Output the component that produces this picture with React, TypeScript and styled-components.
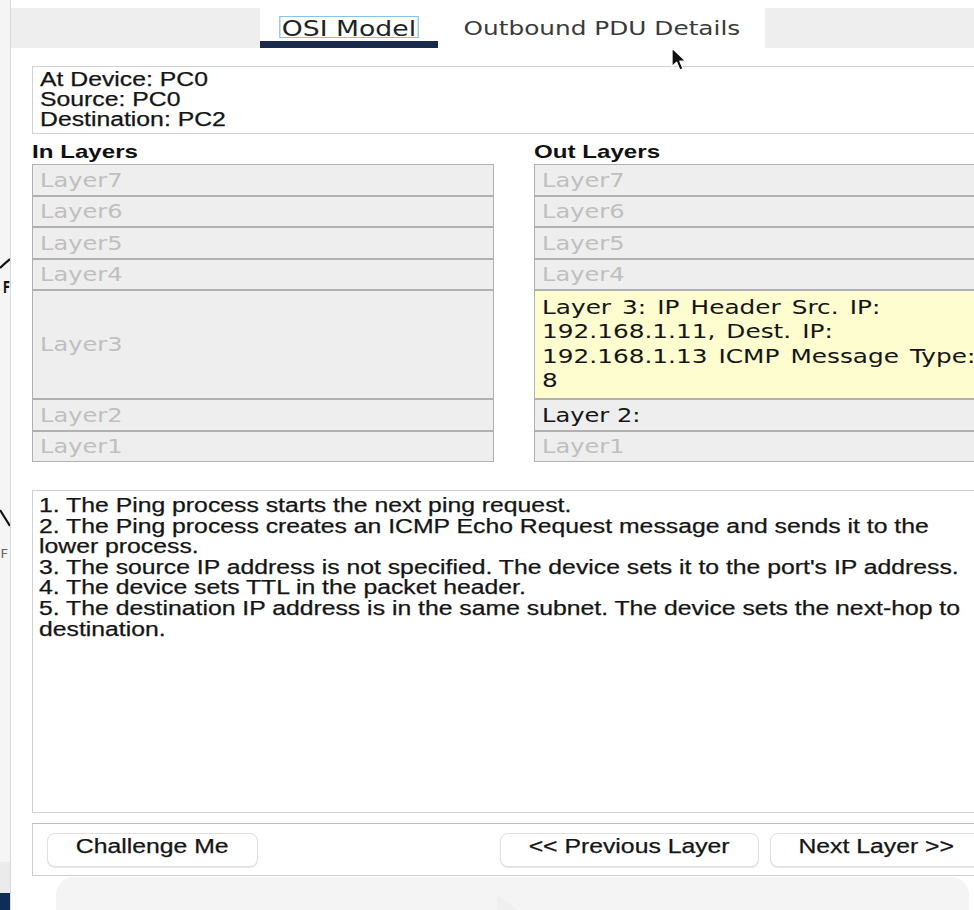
import styled, { createGlobalStyle, css } from "styled-components";

// the capture is stretched sideways, so every text run is widened by this factor
const STRETCH = 1.27;

const sans = `"Liberation Sans", Arial, Helvetica, sans-serif`;
const verdana = `"DejaVu Sans", Verdana, sans-serif`;

const GlobalStyle = createGlobalStyle`
  html, body {
    margin: 0;
    padding: 0;
    background: #ffffff;
    overflow: hidden;
  }
  #root {
    width: 974px;
    height: 910px;
  }
`;

const stretched = css`
  transform: scaleX(${STRETCH});
  transform-origin: 0 0;
  white-space: nowrap;
`;

// mac-style text is a touch heavier than Liberation at this size
const heavier = css`
  -webkit-text-stroke: 0.25px currentColor;
`;

const Page = styled.div`
  display: flex;
  width: 974px;
  height: 910px;
  overflow: hidden;
  background: #ffffff;
`;

const Backdrop = styled.svg`
  flex: 0 0 10px;
  display: block;
`;

const Window = styled.div`
  position: relative;
  flex: 0 0 1007px;
  display: flex;
  flex-direction: column;
  box-sizing: border-box;
  overflow: hidden;
  border-left: 1px solid #d8d8d8;
  background: #ffffff;
`;

const TabBar = styled.div`
  flex: none;
  display: flex;
  height: 40px;
  margin-top: 8px;
  padding-left: 249px;
  background: #efeeee;
`;

const Tab = styled.div<{ $width: number; $active?: boolean }>`
  display: flex;
  justify-content: center;
  align-items: flex-start;
  box-sizing: border-box;
  width: ${(p) => p.$width}px;
  padding-top: 8px;
  background: #ffffff;
  box-shadow: ${(p) => (p.$active ? "inset 0 -7px 0 #18294b" : "none")};
`;

const TabLabel = styled.span<{ $size: number; $focused?: boolean }>`
  display: inline-block;
  box-sizing: border-box;
  height: 22px;
  padding: 4px 1px 0;
  border: 1px solid ${(p) => (p.$focused ? "#86c3ea" : "transparent")};
  font-family: ${verdana};
  font-size: ${(p) => p.$size}px;
  line-height: 16px;
  color: ${(p) => (p.$focused ? "#222222" : "#3a3a3a")};
  ${stretched};
  transform-origin: 50% 0;
`;

const Pointer = styled.svg`
  position: absolute;
  left: 660px;
  top: 47px;
  pointer-events: none;
`;

const Body = styled.div`
  flex: none;
  display: flex;
  flex-direction: column;
  padding: 18px 21px 0;
`;

const InfoBox = styled.div`
  box-sizing: border-box;
  height: 68px;
  padding: 2px 7px 0;
  border: 1px solid #d2d2d2;
  font-family: ${sans};
  font-size: 19.5px;
  line-height: 20px;
  color: #151515;
  ${heavier};
`;

const InfoText = styled.div`
  ${stretched};
`;

const Columns = styled.div`
  display: grid;
  grid-template-columns: 1fr 1fr;
  column-gap: 40px;
  margin-top: 8px;
`;

const Column = styled.div`
  display: flex;
  flex-direction: column;
  min-width: 0;
`;

const ColumnTitle = styled.div`
  height: 20px;
  margin-bottom: 2px;
  font-family: ${sans};
  font-weight: bold;
  font-size: 19px;
  line-height: 20px;
  color: #111111;
  ${stretched};
`;

type Tone = "off" | "on" | "current";

const LayerRow = styled.div<{ $tall?: boolean; $tone: Tone }>`
  display: flex;
  align-items: center;
  box-sizing: border-box;
  height: ${(p) => (p.$tall ? 109 : 31.5)}px;
  padding: 0 7px;
  border: 1px solid #b1b1b1;
  background: ${(p) => (p.$tone === "current" ? "#fdfdcf" : "#eeeeee")};
  overflow: hidden;
`;

const LayerText = styled.div<{ $tone: Tone }>`
  font-family: ${verdana};
  font-size: ${(p) => (p.$tone === "current" ? 19.5 : 19)}px;
  line-height: 24.5px;
  word-spacing: ${(p) => (p.$tone === "current" ? 2.5 : 0)}px;
  color: ${(p) => (p.$tone === "off" ? "#bfbfbf" : "#151515")};
  ${stretched};
`;

const StepsBox = styled.div`
  box-sizing: border-box;
  height: 323px;
  margin-top: 28px;
  padding: 4px 6px 0;
  border: 1px solid #d0d0d0;
  font-family: ${sans};
  font-size: 19.5px;
  line-height: 20.6px;
  color: #151515;
  ${heavier};
`;

const StepList = styled.ol`
  margin: 0;
  padding: 0;
  list-style: none;
  ${stretched};
`;

const ButtonPanel = styled.div`
  display: flex;
  align-items: center;
  gap: 11px;
  box-sizing: border-box;
  height: 53px;
  margin-top: 10px;
  padding: 0 12px 0 14px;
  border: 1px solid #cdcdcd;
  border-top-color: #bcbcbc;
`;

const Spacer = styled.div`
  flex: 1;
`;

const PanelButton = styled.button<{ $width: number }>`
  display: flex;
  justify-content: center;
  align-items: center;
  box-sizing: border-box;
  width: ${(p) => p.$width}px;
  height: 34px;
  padding: 0 0 7px;
  border: 1px solid #e0e0e0;
  border-radius: 8px;
  background: #ffffff;
  box-shadow: 0 1px 1px rgba(0, 0, 0, 0.1);
  font-family: ${sans};
  font-size: 19.5px;
  color: #151515;
  cursor: default;
  ${heavier};
`;

const ButtonLabel = styled.span`
  display: inline-block;
  ${stretched};
  transform-origin: 50% 50%;
`;

const PlayerBar = styled.div`
  display: flex;
  justify-content: center;
  box-sizing: border-box;
  width: 913px;
  height: 40px;
  margin: 1px 0 0 24px;
  padding: 18px 0 0 0;
  border-radius: 18px 18px 0 0;
  background: #f4f4f4;
`;

interface LayerCell {
  lines: string[];
  tone: Tone;
  tall?: boolean;
}

const IN_LAYERS: LayerCell[] = [7, 6, 5, 4, 3, 2, 1].map((n) => ({
  lines: [`Layer${n}`],
  tone: "off",
  tall: n === 3,
}));

const OUT_LAYERS: LayerCell[] = [
  { lines: ["Layer7"], tone: "off" },
  { lines: ["Layer6"], tone: "off" },
  { lines: ["Layer5"], tone: "off" },
  { lines: ["Layer4"], tone: "off" },
  {
    lines: [
      "Layer 3: IP Header Src. IP:",
      "192.168.1.11, Dest. IP:",
      "192.168.1.13 ICMP Message Type:",
      "8",
    ],
    tone: "current",
    tall: true,
  },
  { lines: ["Layer 2:"], tone: "on" },
  { lines: ["Layer1"], tone: "off" },
];

const STEPS: string[][] = [
  ["1. The Ping process starts the next ping request."],
  [
    "2. The Ping process creates an ICMP Echo Request message and sends it to the",
    "lower process.",
  ],
  [
    "3. The source IP address is not specified. The device sets it to the port's IP address.",
  ],
  ["4. The device sets TTL in the packet header."],
  [
    "5. The destination IP address is in the same subnet. The device sets the next-hop to",
    "destination.",
  ],
];

function LayerStack({ title, cells }: { title: string; cells: LayerCell[] }) {
  return (
    <Column>
      <ColumnTitle>{title}</ColumnTitle>
      {cells.map((cell, i) => (
        <LayerRow key={i} $tall={cell.tall} $tone={cell.tone}>
          <LayerText $tone={cell.tone}>
            {cell.lines.map((line, j) => (
              <div key={j}>{line}</div>
            ))}
          </LayerText>
        </LayerRow>
      ))}
    </Column>
  );
}

export default function App() {
  return (
    <>
      <GlobalStyle />
      <Page>
        <Backdrop width="10" height="910" viewBox="0 0 10 910">
          <rect width="10" height="862" fill="#f5f5f5" />
          <rect y="862" width="10" height="31" fill="#ebebeb" />
          <rect y="893" width="10" height="17" fill="#0f2e55" />
          <path d="M0 268 Q5 263 10 259" stroke="#111" strokeWidth="2.2" fill="none" />
          <text
            x="4.3"
            y="293"
            transform="scale(0.7 1)"
            fontFamily="DejaVu Sans"
            fontWeight="bold"
            fontSize="15"
            fill="#111"
          >
            F
          </text>
          <path d="M0 510 L10 526" stroke="#111" strokeWidth="2.2" fill="none" />
          <text x="0.5" y="558" fontFamily="DejaVu Sans" fontSize="13" fill="#666">
            F
          </text>
        </Backdrop>

        <Window>
          <TabBar>
            <Tab $width={178} $active>
              <TabLabel $size={21} $focused>
                OSI Model
              </TabLabel>
            </Tab>
            <Tab $width={327}>
              <TabLabel $size={19.5}>Outbound PDU Details</TabLabel>
            </Tab>
          </TabBar>

          <Body>
            <InfoBox>
              <InfoText>
                <div>At Device: PC0</div>
                <div>Source: PC0</div>
                <div>Destination: PC2</div>
              </InfoText>
            </InfoBox>

            <Columns>
              <LayerStack title="In Layers" cells={IN_LAYERS} />
              <LayerStack title="Out Layers" cells={OUT_LAYERS} />
            </Columns>

            <StepsBox>
              <StepList>
                {STEPS.map((lines, i) => (
                  <li key={i}>
                    {lines.map((line, j) => (
                      <div key={j}>{line}</div>
                    ))}
                  </li>
                ))}
              </StepList>
            </StepsBox>

            <ButtonPanel>
              <PanelButton $width={211}>
                <ButtonLabel>Challenge Me</ButtonLabel>
              </PanelButton>
              <Spacer />
              <PanelButton $width={259}>
                <ButtonLabel>&lt;&lt; Previous Layer</ButtonLabel>
              </PanelButton>
              <PanelButton $width={213}>
                <ButtonLabel>Next Layer &gt;&gt;</ButtonLabel>
              </PanelButton>
            </ButtonPanel>

            <PlayerBar>
              <svg width="40" height="22" viewBox="0 0 40 22">
                <path d="M4 0 L36 22 L4 22 Z" fill="#efefef" />
              </svg>
            </PlayerBar>
          </Body>

          <Pointer width="18" height="26" viewBox="0 0 18 26">
            <path
              d="M1 1 L1 19.5 L5.6 15.3 L8.8 23 L12 21.6 L8.9 14.2 L15 14.2 Z"
              fill="#111"
              stroke="#ffffff"
              strokeWidth="1.3"
              strokeLinejoin="round"
            />
          </Pointer>
        </Window>
      </Page>
    </>
  );
}
